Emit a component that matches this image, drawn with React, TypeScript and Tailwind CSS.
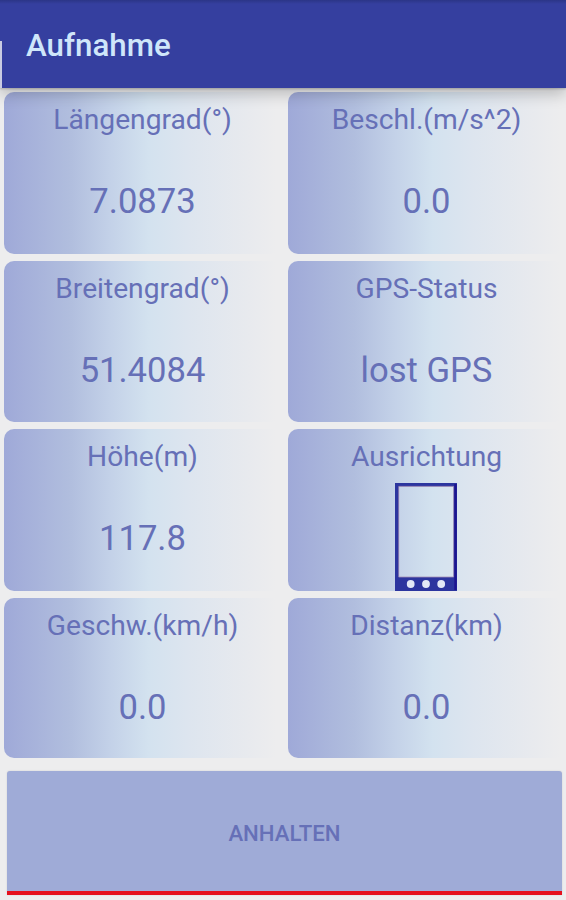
import type { ReactNode } from "react";

type Tile = { label: string; value?: string; icon?: ReactNode };

function PhoneIcon() {
  return (
    <svg width="62" height="108" viewBox="0 0 62 108" className="mt-px mr-[2px] block">
      <path d="M0 0h62v108H0zM4 3.5v90.5h54.5V3.5z" fill="#2c359f" fillRule="evenodd" />
      <path d="M3.7 94V3.4h55V94z" fill="none" stroke="#a58fb5" strokeWidth="0.8" />
      <path d="M60.5 1v106" stroke="#1c1490" strokeWidth="2.4" />
      <circle cx="15.7" cy="101" r="3.9" fill="#e2e8f6" />
      <circle cx="31" cy="101" r="3.9" fill="#e2e8f6" />
      <circle cx="46.2" cy="101" r="3.9" fill="#e2e8f6" />
    </svg>
  );
}

const tiles: Tile[] = [
  { label: "Längengrad(°)", value: "7.0873" },
  { label: "Beschl.(m/s^2)", value: "0.0" },
  { label: "Breitengrad(°)", value: "51.4084" },
  { label: "GPS-Status", value: "lost GPS" },
  { label: "Höhe(m)", value: "117.8" },
  { label: "Ausrichtung", icon: <PhoneIcon /> },
  { label: "Geschw.(km/h)", value: "0.0" },
  { label: "Distanz(km)", value: "0.0" },
];

function TileCard({ label, value, icon }: Tile) {
  return (
    <div className="flex flex-col items-center rounded-[10px] bg-[linear-gradient(90deg,#9fa9d8_0%,#b1bede_24%,#c3d1e8_38%,#d3e2ef_52%,#dde5ef_66%,#e8eaee_88%,#ededee_98%)]">
      <div className="h-[53px] pt-[11px] pr-px text-[28.2px] leading-[34px]">{label}</div>
      {icon ?? <div className="pt-[36px] pr-px text-[34.6px] leading-[40px]">{value}</div>}
    </div>
  );
}

export default function App() {
  return (
    <div className="flex h-[900px] w-[566px] flex-col overflow-hidden bg-[#ededee] font-[Roboto,sans-serif] text-[#6670b7]">
      <header className="relative z-10 flex h-[88px] shrink-0 items-center bg-[#353f9f] bg-[linear-gradient(180deg,#2b3587_0px,#353f9f_4px)] pt-[4px] pl-[26px] shadow-[0_1px_2px_rgba(0,0,0,0.2),0_6px_14px_rgba(0,0,0,0.22)]">
        <h1 className="text-[31.3px] leading-[40px] font-medium text-[#cfe6fa]">Aufnahme</h1>
        <span className="absolute bottom-0 left-0 h-[47px] w-[2px] bg-[#c9cbe2]" />
      </header>
      <main className="grid grid-cols-[278px_278px] grid-rows-[162px_161px_162px_160px] gap-x-[6px] gap-y-[7px] pt-[4px] pl-[4px]">
        {tiles.map((t) => (
          <TileCard key={t.label} {...t} />
        ))}
      </main>
      <button
        type="button"
        className="mt-[13px] ml-[7px] h-[124px] w-[555px] shrink-0 rounded-t-[3px] border-b-4 border-[#e5101d] bg-[#9fabd7] pt-[6px] text-[22.2px] font-medium shadow-[0_0_2px_rgba(0,0,0,0.12)]"
      >
        ANHALTEN
      </button>
    </div>
  );
}
